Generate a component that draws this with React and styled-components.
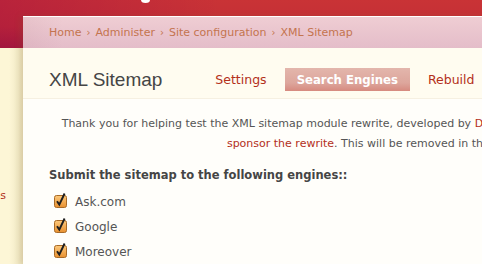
import React from "react";
import styled, { createGlobalStyle } from "styled-components";

const Global = createGlobalStyle`
  html, body { margin: 0; padding: 0; overflow: hidden; }
  body { font-family: "DejaVu Sans", Verdana, sans-serif; background: #fdf6d6; }
`;

const Page = styled.div`
  width: 800px;
  height: 264px;
  overflow: hidden;
  background:
    linear-gradient(to right, rgba(150, 0, 70, 0.32) 0, rgba(150, 0, 70, 0) 220px) 0 0 / 100% 48px no-repeat,
    linear-gradient(to bottom, #c93336 0, #c32f36 55%, #a8203a 100%) 0 0 / 100% 48px no-repeat,
    #fdf6d6;
`;

const Header = styled.header`
  height: 16px;
  display: flex;
  align-items: flex-start;
  padding-left: 141px;
  overflow: hidden;
`;

const LogoTail = styled.span`
  display: block;
  width: 9px;
  height: 6px;
  margin-top: -3px;
  border-radius: 50%;
  background: #fff;
`;

const Row = styled.div`
  display: flex;
  align-items: stretch;
`;

const Sidebar = styled.nav`
  width: 23px;
  flex: none;
  padding: 172px 17px 0 0;
  box-sizing: border-box;
  display: flex;
  flex-direction: column;
  align-items: flex-end;
  overflow: hidden;
  height: 248px;
  background: linear-gradient(to right, rgba(160, 140, 60, 0) 40%, rgba(150, 130, 60, 0.16) 100%) 0 32px / 100% 100% no-repeat;
`;

const SideLink = styled.a`
  white-space: nowrap;
  font-size: 11px;
  line-height: 16px;
  color: #b3301a;
  text-decoration: none;
`;

const Panel = styled.main`
  width: 745px;
  flex: none;
  border-top: 1px solid #fff;
  background: #fffefa;
  box-shadow: -3px 0 6px rgba(120, 90, 40, 0.18);
`;

const Breadcrumb = styled.div`
  height: 31px;
  line-height: 32px;
  padding-left: 26px;
  font-size: 11px;
  color: #c4744f;
  background:
    linear-gradient(to right, rgba(150, 80, 100, 0.08) 0, rgba(150, 80, 100, 0) 40px),
    linear-gradient(to bottom, #efcdd3 0, #e4bdc9 100%);
`;

const Crumb = styled.a`
  color: inherit;
  text-decoration: none;
`;

const Sep = styled.span`
  margin: 0 5px;
  font-size: 10px;
`;

const PageHead = styled.div`
  display: flex;
  align-items: flex-start;
  padding: 20px 26px 7px;
  background: #fffcf0;
  border-bottom: 1px solid #f6f0e1;
`;

const Title = styled.h1`
  margin: 0 41px 0 0;
  font-family: "Liberation Sans", Arial, sans-serif;
  font-weight: normal;
  font-size: 19px;
  line-height: 23px;
  color: #454545;
`;

const Tabs = styled.ul`
  display: flex;
  gap: 6px;
  margin: 0;
  padding: 0;
  list-style: none;
`;

const Tab = styled.li`
  height: 23px;
  padding: ${(p) => (p.$active ? "0 12px 0 12px" : "0 12px")};
  line-height: 24px;
  font-size: ${(p) => (p.$active ? "13px" : "12.5px")};
  font-family: ${(p) =>
    p.$active ? '"DejaVu Sans Condensed", "DejaVu Sans", sans-serif' : '"DejaVu Sans", sans-serif'};
  font-weight: ${(p) => (p.$active ? "bold" : "normal")};
  color: ${(p) => (p.$active ? "#fff" : "#b3301a")};
  background: ${(p) =>
    p.$active ? "linear-gradient(to bottom, #e3b6ac 0, #dda69c 65%, #d68a7f 100%)" : "transparent"};
`;

const Body = styled.section`
  padding: 15px 26px 0;
`;

const Notice = styled.p`
  margin: 0;
  text-align: center;
  font-size: 11px;
  line-height: 20px;
  color: #555;
  white-space: nowrap;
`;

const Link = styled.a`
  color: #b3301a;
  text-decoration: none;
`;

const Legend = styled.h2`
  margin: 13px 0 0;
  font-size: 11.5px;
  line-height: 16px;
  font-weight: bold;
  color: #454545;
`;

const Engines = styled.ul`
  margin: 7px 0 0;
  padding: 0 0 0 5px;
  list-style: none;
`;

const Engine = styled.li`
  display: flex;
  align-items: flex-start;
  gap: 7px;
  height: 25px;
  line-height: 25px;
  font-size: 12px;
  color: #555;
`;

const Box = styled.svg`
  flex: none;
  margin-top: 2px;
`;

const CheckBox = () => (
  <Box width="14" height="16" viewBox="0 0 14 16" aria-hidden="true">
    <defs>
      <linearGradient id="cbg" x1="0" y1="0" x2="0" y2="1">
        <stop offset="0" stopColor="#fcc97c" />
        <stop offset="1" stopColor="#e8902f" />
      </linearGradient>
    </defs>
    <rect x="0.5" y="3.5" width="12" height="12" rx="2" fill="url(#cbg)" stroke="#a86a26" />
    <path d="M3 9.2 L5.3 12.6 L10.6 1.5" fill="none" stroke="#1d1d1d" strokeWidth="1.9" strokeLinejoin="miter" />
  </Box>
);

const engines = ["Ask.com", "Google", "Moreover"];

export default function App() {
  return (
    <>
      <Global />
      <Page>
        <Header>
          <LogoTail />
        </Header>
        <Row>
          <Sidebar>
            <SideLink href="#">XML sitemaps</SideLink>
          </Sidebar>
          <Panel>
            <Breadcrumb>
              <Crumb href="#">Home</Crumb>
              <Sep>›</Sep>
              <Crumb href="#">Administer</Crumb>
              <Sep>›</Sep>
              <Crumb href="#">Site configuration</Crumb>
              <Sep>›</Sep>
              <Crumb href="#">XML Sitemap</Crumb>
            </Breadcrumb>
            <PageHead>
              <Title>XML Sitemap</Title>
              <Tabs>
                <Tab>Settings</Tab>
                <Tab $active>Search Engines</Tab>
                <Tab>Rebuild</Tab>
              </Tabs>
            </PageHead>
            <Body>
              <Notice>
                Thank you for helping test the XML sitemap module rewrite, developed by{" "}
                <Link href="#">Dave Reid</Link>. If you can, please consider helping
                <br />
                <Link href="#">sponsor the rewrite</Link>. This will be removed in the final release.
              </Notice>
              <Legend>Submit the sitemap to the following engines::</Legend>
              <Engines>
                {engines.map((e) => (
                  <Engine key={e}>
                    <CheckBox />
                    {e}
                  </Engine>
                ))}
              </Engines>
            </Body>
          </Panel>
        </Row>
      </Page>
    </>
  );
}
